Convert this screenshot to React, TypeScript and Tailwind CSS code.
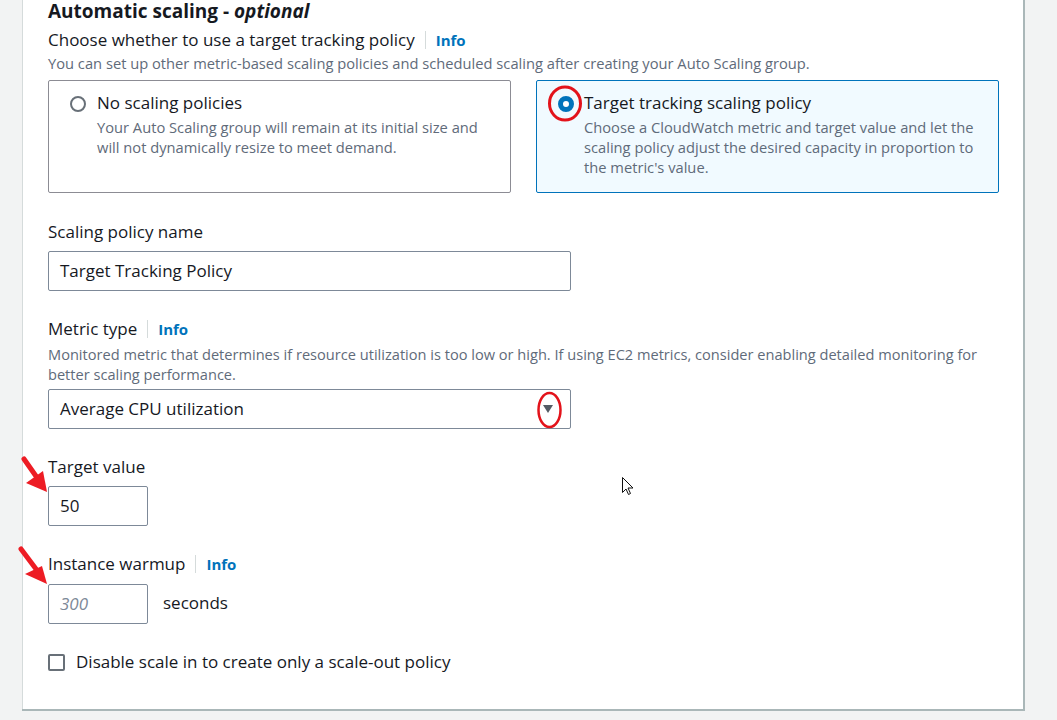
export default function App() {
  const font = { fontFamily: "'Open Sans', 'Noto Sans', sans-serif" };

  return (
    <div className="relative h-[720px] w-[1057px] overflow-hidden bg-[#f2f3f3] text-[#16191f]" style={font}>
      <div className="ml-[22px] w-[1001px] bg-white border-l border-[#d5dbdb] shadow-[1px_1px_0_1px_#aab7b8] pl-[25px] pt-0 pb-[36px]">
        <h2 className="mt-0 text-[19px] leading-[22px] font-bold">
          Automatic scaling - <i>optional</i>
        </h2>

        <div className="mt-[7px] flex items-center text-[17px] leading-[22px]">
          <span>Choose whether to use a target tracking policy</span>
          <span className="mx-[10px] h-[18px] w-px bg-[#d5dbdb]" />
          <span className="text-[15px] font-bold text-[#0073bb]">Info</span>
        </div>
        <p className="mt-[2px] text-[14.7px] leading-[20px] text-[#5f6b7a]">
          You can set up other metric-based scaling policies and scheduled scaling after creating your Auto Scaling group.
        </p>

        <div className="mt-[7px] flex gap-[25px]">
          <div className="w-[463px] h-[113px] rounded-[2px] border border-[#8c8c94] pl-[21px] pt-[11px] pr-[10px] flex">
            <span className="mt-[4px] h-4 w-4 shrink-0 rounded-full border-2 border-[#687078] bg-white" />
            <div className="ml-[11px]">
              <div className="text-[17px] leading-[22px]">No scaling policies</div>
              <p className="mt-[3px] text-[14.7px] leading-[20px] text-[#5f6b7a] whitespace-nowrap">
                Your Auto Scaling group will remain at its initial size and
                <br />
                will not dynamically resize to meet demand.
              </p>
            </div>
          </div>
          <div className="w-[463px] h-[113px] rounded-[2px] border border-[#0073bb] bg-[#f1faff] pl-[21px] pt-[11px] pr-[10px] flex">
            <span className="mt-[4px] h-4 w-4 shrink-0 rounded-full border-[5px] border-[#0073bb] bg-white" />
            <div className="ml-[10px]">
              <div className="text-[17px] leading-[22px]">Target tracking scaling policy</div>
              <p className="mt-[3px] text-[14.7px] leading-[20px] text-[#5f6b7a] whitespace-nowrap">
                Choose a CloudWatch metric and target value and let the
                <br />
                scaling policy adjust the desired capacity in proportion to
                <br />
                the metric's value.
              </p>
            </div>
          </div>
        </div>

        <div className="mt-[28px] text-[17px] leading-[22px]">Scaling policy name</div>
        <div className="mt-[8px] flex h-[40px] w-[523px] items-center rounded-[2px] border border-[#7d8998] pl-[11px] text-[17px]">
          Target Tracking Policy
        </div>

        <div className="mt-[27px] flex items-center text-[17px] leading-[22px]">
          <span>Metric type</span>
          <span className="mx-[10px] h-[18px] w-px bg-[#d5dbdb]" />
          <span className="text-[15px] font-bold text-[#0073bb]">Info</span>
        </div>
        <p className="mt-[4px] text-[14.6px] leading-[20px] text-[#5f6b7a] whitespace-nowrap">
          Monitored metric that determines if resource utilization is too low or high. If using EC2 metrics, consider enabling detailed monitoring for
          <br />
          better scaling performance.
        </p>
        <div className="mt-[5px] flex h-[40px] w-[523px] items-center justify-between rounded-[2px] border border-[#7d8998] pl-[11px] pr-[16px] text-[17px]">
          <span>Average CPU utilization</span>
          <svg width="12" height="10" viewBox="0 0 12 10">
            <path d="M1 1h10L6 9z" fill="#545b64" />
          </svg>
        </div>

        <div className="mt-[27px] text-[17px] leading-[22px]">Target value</div>
        <div className="mt-[8px] flex h-[40px] w-[100px] items-center rounded-[2px] border border-[#7d8998] pl-[11px] text-[17px]">
          50
        </div>

        <div className="mt-[27px] flex items-center text-[17px] leading-[22px]">
          <span>Instance warmup</span>
          <span className="mx-[10px] h-[18px] w-px bg-[#d5dbdb]" />
          <span className="text-[15px] font-bold text-[#0073bb]">Info</span>
        </div>
        <div className="mt-[9px] flex items-center">
          <div className="flex h-[40px] w-[100px] items-center rounded-[2px] border border-[#7d8998] pl-[11px] text-[17px] italic text-[#7d8998]">
            300
          </div>
          <span className="ml-[15px] mb-[2px] text-[17px] leading-[22px]">seconds</span>
        </div>

        <label className="mt-[27px] flex items-center text-[17px] leading-[22px]">
          <span className="h-[17px] w-[17px] rounded-[2px] border-2 border-[#687078] bg-white" />
          <span className="ml-[11px]">Disable scale in to create only a scale-out policy</span>
        </label>
      </div>

      {/* red annotations and mouse cursor drawn over the screenshot */}
      <svg className="pointer-events-none absolute left-0 top-0" width="1057" height="720">
        <ellipse cx="565" cy="103.5" rx="15.5" ry="16.5" fill="none" stroke="#e3131b" strokeWidth="3" />
        <ellipse cx="549.5" cy="410" rx="11" ry="17" fill="none" stroke="#e3131b" strokeWidth="2.5" />
        <line x1="24" y1="459" x2="38" y2="479" stroke="#ed1c24" strokeWidth="5" strokeLinecap="round" />
        <path d="M47 492L26 483L43 471z" fill="#ed1c24" />
        <line x1="21" y1="549" x2="36" y2="569" stroke="#ed1c24" strokeWidth="5" strokeLinecap="round" />
        <path d="M47 584L25 574L42 566z" fill="#ed1c24" />
        <path d="M622.5 477.5v15l3.5-3.5 2.5 5.5 2-1-2.5-5.5h5z" fill="white" stroke="#111" strokeWidth="1" strokeLinejoin="round" />
      </svg>
    </div>
  );
}
